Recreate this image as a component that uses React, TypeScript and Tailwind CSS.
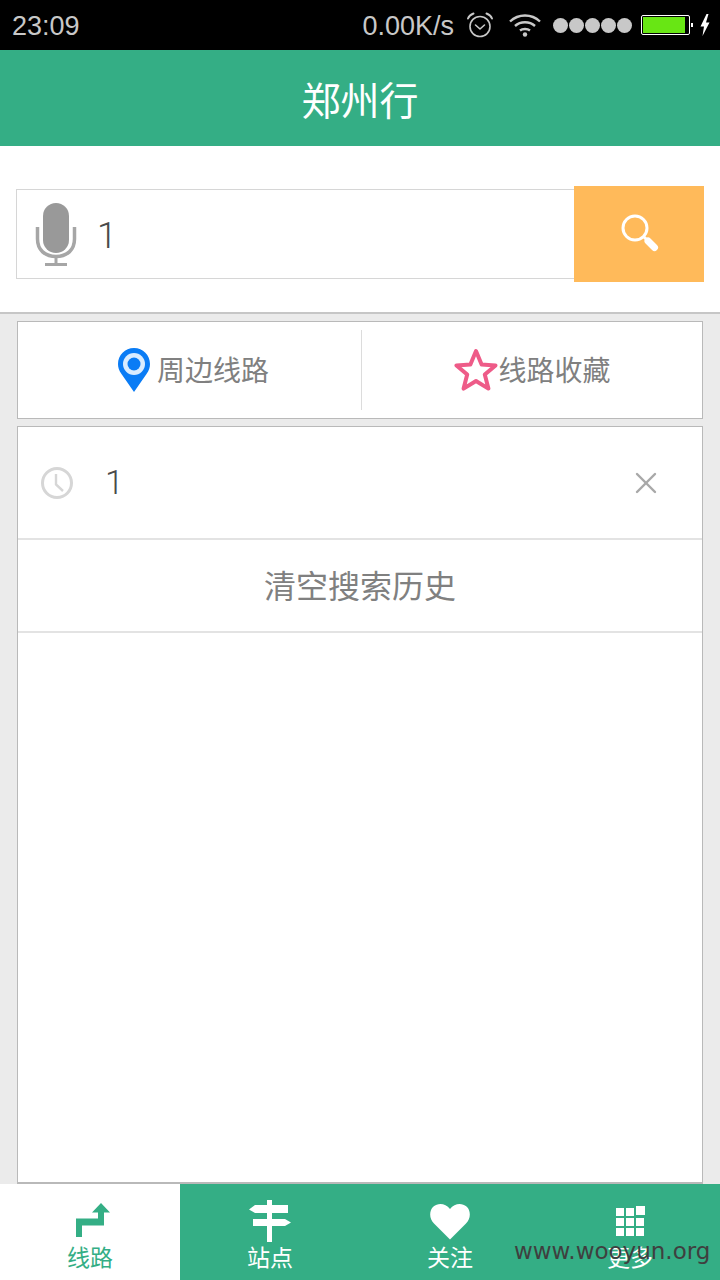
import type { ReactNode } from 'react';
import { X } from 'lucide-react';

const cjk = { fontFamily: '"Noto Sans CJK SC", sans-serif' };

function AlarmIcon() {
  return (
    <svg width="28" height="26" viewBox="0 0 28 26" fill="none" stroke="#c8c8c8" strokeWidth="1.6" strokeLinecap="round" strokeLinejoin="round">
      <circle cx="14" cy="14.5" r="10" />
      <path d="M9.5 13l4.5 4 4.5-4" />
      <path d="M2 6.5C3 4 5 2.5 7.5 1.5" strokeWidth="2" />
      <path d="M26 6.5C25 4 23 2.5 20.5 1.5" strokeWidth="2" />
    </svg>
  );
}

function WifiIcon() {
  return (
    <svg width="32" height="24" viewBox="0 0 32 24" fill="none" stroke="#c8c8c8" strokeWidth="2.4">
      <path d="M1 8.5C9.5 0.5 22.5 0.5 31 8.5" />
      <path d="M6 13C11.5 8 20.5 8 26 13" />
      <path d="M11 17.5C13.5 15.5 18.5 15.5 21 17.5" />
      <circle cx="16" cy="21.5" r="2.2" fill="#c8c8c8" stroke="none" />
    </svg>
  );
}

function StatusBar() {
  return (
    <div className="h-[50px] bg-black flex items-center text-[#c8c8c8] text-[27px] pl-3 pr-[10px]" style={{ fontFamily: '"Liberation Sans", sans-serif' }}>
      <span className="mt-[2px]">23:09</span>
      <span className="ml-auto mt-[2px]">0.00K/s</span>
      <span className="ml-[12px]"><AlarmIcon /></span>
      <span className="ml-[15px]"><WifiIcon /></span>
      <div className="ml-[12px] flex gap-[1px]">
        {[0, 1, 2, 3, 4].map(i => (
          <div key={i} className="w-[15px] h-[15px] rounded-full bg-[#c8c8c8]" />
        ))}
      </div>
      <div className="ml-[9px] w-[49px] h-[20px] border border-white rounded-[2px] p-[1px] pr-[4px]">
        <div className="h-full bg-[#68e614]" />
      </div>
      <div className="w-[2px] h-[4px] bg-white ml-[1px]" />
      <svg className="ml-[7px]" width="10" height="22" viewBox="0 0 10 22" fill="white">
        <path d="M6.5 0L0.5 12.5H4L2.5 22L9.5 8.5H6L8.5 0Z" />
      </svg>
    </div>
  );
}

function MicIcon() {
  return (
    <svg className="mt-[2px] -ml-px" width="42" height="64" viewBox="0 0 42 64" fill="none">
      <rect x="8" y="0" width="26" height="50" rx="13" fill="#999999" />
      <path d="M2.5 24V36C2.5 47 10 53.5 21 53.5C32 53.5 39.5 47 39.5 36V24" stroke="#a6a6a6" strokeWidth="3.5" />
      <path d="M21 53V60" stroke="#a6a6a6" strokeWidth="3" />
      <path d="M10 61.5H32" stroke="#a6a6a6" strokeWidth="3" />
    </svg>
  );
}

function SearchIcon() {
  return (
    <svg className="ml-[2px]" width="38" height="40" viewBox="0 0 38 40" fill="none" stroke="white">
      <circle cx="14" cy="14" r="12" strokeWidth="3" />
      <path d="M23 23L26 26" strokeWidth="3" />
      <path d="M27 27L33.5 33.5" strokeWidth="7" strokeLinecap="round" />
    </svg>
  );
}

function PinIcon() {
  return (
    <svg width="32" height="44" viewBox="0 0 32 44">
      <path d="M16 44L3.5 26C1 22.5 0 19.5 0 16C0 7 7 0 16 0C25 0 32 7 32 16C32 19.5 31 22.5 28.5 26Z" fill="#0a7cf5" />
      <circle cx="16" cy="16" r="11" fill="#d9ecff" />
      <circle cx="16" cy="16" r="6.5" fill="#0a7cf5" />
    </svg>
  );
}

function StarIcon() {
  return (
    <svg width="44" height="44" viewBox="0 0 44 44" fill="none" stroke="#ee5b88" strokeWidth="4" strokeLinejoin="round">
      <path d="M22 3L27.6 16.6L41.5 17.4L30.8 26.6L34.4 40.6L22 33L9.6 40.6L13.2 26.6L2.5 17.4L16.4 16.6Z" />
    </svg>
  );
}

function ClockIcon() {
  return (
    <svg width="34" height="34" viewBox="0 0 34 34" fill="none" stroke="#d6d6d6" strokeWidth="3">
      <circle cx="17" cy="17" r="14.5" />
      <path d="M16 8V18.5L23 25" strokeWidth="2.4" />
    </svg>
  );
}

function RouteIcon() {
  return (
    <svg className="ml-[6px] mb-[5px]" width="34" height="34" viewBox="0 0 34 34" fill="#34ae85">
      <path d="M0 34V15.5H22V9.5H16L25 0L34 9.5H28V22.5H6V34Z" />
    </svg>
  );
}

function SignIcon() {
  return (
    <svg width="42" height="42" viewBox="0 0 42 42" fill="white">
      <rect x="18" y="0" width="5" height="42" />
      <path d="M6 5H39V13H6L0 9.5Z" />
      <path d="M4 19H36L42 22.5L36 26H4Z" />
    </svg>
  );
}

function HeartIcon() {
  return (
    <svg className="mb-[2px]" width="40" height="37" viewBox="0 0 40 36" fill="white">
      <path d="M20 36L4 20C-1 15 -1 7 3.5 3C8 -1 15.5 -0.5 20 5.5C24.5 -0.5 32 -1 36.5 3C41 7 41 15 36 20Z" />
    </svg>
  );
}

function GridIcon() {
  return (
    <svg className="mb-[6px]" width="29" height="30" viewBox="0 0 29 30" fill="white">
      <rect x="0" y="2" width="8" height="8" />
      <rect x="10" y="2" width="8" height="8" />
      <rect x="20" y="0" width="9" height="9" />
      <rect x="0" y="12" width="8" height="8" />
      <rect x="10" y="12" width="8" height="8" />
      <rect x="20" y="12" width="8" height="8" />
      <rect x="0" y="22" width="8" height="8" />
      <rect x="10" y="22" width="8" height="8" />
      <rect x="20" y="22" width="8" height="8" />
    </svg>
  );
}

function NavItem({ label, active, icon }: { label: string; active?: boolean; icon: ReactNode }) {
  return (
    <div className={`flex-1 h-full flex flex-col items-center ${active ? 'bg-white text-[#34ae85]' : 'text-white'}`}>
      <div className="h-[58px] flex items-end justify-center">{icon}</div>
      <span className="text-[23px] leading-[30px] -mt-px" style={cjk}>{label}</span>
    </div>
  );
}

export default function App() {
  return (
    <div className="relative w-[720px] h-[1280px] bg-[#ebebeb] flex flex-col overflow-hidden">
      <StatusBar />
      <div className="h-[96px] bg-[#34ae85] flex items-center justify-center text-white text-[39px]" style={cjk}>
        郑州行
      </div>

      <div className="h-[168px] bg-white border-b-2 border-[#c6c6c6] pl-4 pr-4 pt-10 flex">
        <div className="flex-1 h-[90px] mt-[3px] border border-[#d6d6d6] border-r-0 flex items-center pl-[19px]">
          <MicIcon />
          <span className="ml-[20px] mt-1 text-[36px] text-[#4a4a4a] leading-none" style={{ fontFamily: 'Roboto, sans-serif', fontWeight: 300 }}>1</span>
        </div>
        <div className="w-[130px] h-[96px] bg-[#ffba5a] flex items-center justify-center">
          <SearchIcon />
        </div>
      </div>

      <div className="mx-[17px] mt-[7px] h-[98px] bg-white border border-[#b9b9b9] flex items-center text-[28px] text-[#808080]" style={cjk}>
        <div className="w-[343px] flex items-center justify-center gap-[7px] pl-[8px]">
          <PinIcon />
          <span className="-mt-[2px]">周边线路</span>
        </div>
        <div className="w-px h-[80px] bg-[#dcdcdc]" />
        <div className="flex-1 flex items-center justify-center pl-[1px]">
          <StarIcon />
          <span className="-mt-[2px]">线路收藏</span>
        </div>
      </div>

      <div className="mx-[17px] mt-[7px] h-[758px] bg-white border border-[#b9b9b9] border-b-2">
        <div className="h-[113px] border-b-2 border-[#e3e3e3] flex items-center pl-[22px] pr-[38px]">
          <ClockIcon />
          <span className="ml-[31px] text-[34px] text-[#4a4a4a]" style={{ fontFamily: 'Roboto, sans-serif', fontWeight: 300 }}>1</span>
          <X className="ml-auto text-[#a8a8a8]" size={36} strokeWidth={1.6} />
        </div>
        <div className="h-[93px] border-b-2 border-[#e3e3e3] flex items-center justify-center pb-[3px] text-[32px] text-[#808080]" style={cjk}>
          清空搜索历史
        </div>
      </div>

      <div className="h-[96px] bg-[#34ae85] flex">
        <NavItem label="线路" active icon={<RouteIcon />} />
        <NavItem label="站点" icon={<SignIcon />} />
        <NavItem label="关注" icon={<HeartIcon />} />
        <NavItem label="更多" icon={<GridIcon />} />
      </div>

      <span className="absolute left-[514px] top-[1237px] text-[23px] leading-[28px] text-[#3f3f3f]" style={{ fontFamily: '"DejaVu Sans", sans-serif' }}>
        www.wooyun.org
      </span>
    </div>
  );
}
